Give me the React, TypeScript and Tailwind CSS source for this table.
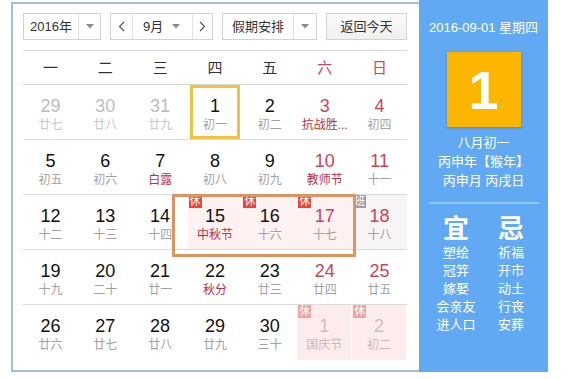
import React from "react";

type Day = {
  n: number;
  sub: string;
  muted?: boolean;
  weekend?: boolean;
  fest?: boolean;
  badge?: "休" | "班";
  tone?: "rest" | "work" | "next";
  today?: boolean;
};

const font = "font-['Liberation_Sans','Noto_Sans_CJK_SC',sans-serif]";

const weeks: Day[][] = [
  [
    { n: 29, sub: "廿七", muted: true },
    { n: 30, sub: "廿八", muted: true },
    { n: 31, sub: "廿九", muted: true },
    { n: 1, sub: "初一", today: true },
    { n: 2, sub: "初二" },
    { n: 3, sub: "抗战胜...", weekend: true, fest: true },
    { n: 4, sub: "初四", weekend: true },
  ],
  [
    { n: 5, sub: "初五" },
    { n: 6, sub: "初六" },
    { n: 7, sub: "白露", fest: true },
    { n: 8, sub: "初八" },
    { n: 9, sub: "初九" },
    { n: 10, sub: "教师节", weekend: true, fest: true },
    { n: 11, sub: "十一", weekend: true },
  ],
  [
    { n: 12, sub: "十二" },
    { n: 13, sub: "十三" },
    { n: 14, sub: "十四" },
    { n: 15, sub: "中秋节", fest: true, badge: "休", tone: "rest" },
    { n: 16, sub: "十六", badge: "休", tone: "rest" },
    { n: 17, sub: "十七", weekend: true, badge: "休", tone: "rest" },
    { n: 18, sub: "十八", weekend: true, badge: "班", tone: "work" },
  ],
  [
    { n: 19, sub: "十九" },
    { n: 20, sub: "二十" },
    { n: 21, sub: "廿一" },
    { n: 22, sub: "秋分", fest: true },
    { n: 23, sub: "廿三" },
    { n: 24, sub: "廿四", weekend: true },
    { n: 25, sub: "廿五", weekend: true },
  ],
  [
    { n: 26, sub: "廿六" },
    { n: 27, sub: "廿七" },
    { n: 28, sub: "廿八" },
    { n: 29, sub: "廿九" },
    { n: 30, sub: "三十" },
    { n: 1, sub: "国庆节", badge: "休", tone: "next" },
    { n: 2, sub: "初二", badge: "休", tone: "next" },
  ],
];

function Caret() {
  return (
    <svg width="8" height="5" viewBox="0 0 8 5" aria-hidden="true">
      <polygon points="0,0 8,0 4,4.5" fill="#8a8a8a" />
    </svg>
  );
}

function Chevron({ dir }: { dir: "l" | "r" }) {
  return (
    <svg width="7" height="11" viewBox="0 0 7 11" fill="none" stroke="#555" strokeWidth="1.2" aria-hidden="true">
      {dir === "l" ? <polyline points="6,1 1.5,5.5 6,10" /> : <polyline points="1,1 5.5,5.5 1,10" />}
    </svg>
  );
}

function Cell({ d }: { d: Day }) {
  let numColor = "text-[#111]";
  if (d.muted) numColor = "text-[#bdbdbd]";
  else if (d.tone === "next") numColor = "text-[#c9c0c0]";
  else if (d.weekend) numColor = "text-[#cf4257]";

  let subColor = "text-[#a2a2a2]";
  if (d.muted) subColor = "text-[#c8c8c8]";
  else if (d.tone === "next") subColor = "text-[#cdb8b8]";
  else if (d.fest) subColor = "text-[#bf2f43]";

  let bg = "";
  if (d.tone === "rest") bg = "bg-[#fdf1f1]";
  if (d.tone === "work") bg = "bg-[#f6f4f4]";
  if (d.tone === "next") bg = "bg-[#fdecec] mr-px";

  let badgeBg = "bg-[#e4493b]";
  if (d.badge === "班") badgeBg = "bg-[#9d9d9d]";
  if (d.tone === "next") badgeBg = "bg-[#f0a3a3]";

  return (
    <div className={`relative flex flex-col items-center pt-[10px] ${bg}`}>
      {d.badge && (
        <span
          className={`absolute left-[1px] top-0 flex h-[13px] w-[13px] items-center justify-center text-[11px] leading-none text-white ${badgeBg}`}
        >
          {d.badge}
        </span>
      )}
      {d.today && <div className="absolute inset-x-[2px] top-0 bottom-0 border-[3px] border-[#f2c141]" />}
      <span className={`text-[18px] leading-[22px] ${numColor}`}>{d.n}</span>
      <span className={`whitespace-nowrap text-[12px] leading-[16px] ${subColor}`}>{d.sub}</span>
    </div>
  );
}

export default function App() {
  return (
    <div className={`flex h-[379px] w-[582px] overflow-hidden bg-white ${font}`}>
      <div className="ml-[11px] mt-[2px] flex h-[370px] w-[408px] flex-col border-y-2 border-l-2 border-[#a1c0d6] pl-[10px] pr-[12px] pt-[9px]">
        <div className="flex h-[27px] text-[13px] text-[#333]">
          <div className="flex w-[78px] border border-[#d2d2d2]">
            <span className="flex w-[55px] items-center justify-center border-r border-[#e2e2e2]">2016年</span>
            <span className="flex flex-1 items-center justify-center">
              <Caret />
            </span>
          </div>
          <div className="ml-[9px] flex w-[103px] border border-[#d2d2d2]">
            <span className="flex w-[22px] items-center justify-center border-r border-[#e2e2e2]">
              <Chevron dir="l" />
            </span>
            <span className="flex w-[60px] items-center justify-between border-r border-[#e2e2e2] pl-[10px] pr-[12px]">
              9月
              <Caret />
            </span>
            <span className="flex flex-1 items-center justify-center">
              <Chevron dir="r" />
            </span>
          </div>
          <div className="ml-[9px] flex w-[95px] border border-[#d2d2d2]">
            <span className="flex w-[71px] items-center justify-center border-r border-[#e2e2e2]">假期安排</span>
            <span className="flex flex-1 items-center justify-center">
              <Caret />
            </span>
          </div>
          <button
            type="button"
            className="ml-[9px] flex w-[81px] items-center justify-center border border-[#d2d2d2] bg-gradient-to-b from-[#fbfbfb] to-[#efefef] text-[13px] text-[#333]"
          >
            返回今天
          </button>
        </div>

        <div className="mt-[10px] grid h-[35px] grid-cols-7 border-y border-[#d6d6d6] pt-[2px] text-[15px]">
          {["一", "二", "三", "四", "五", "六", "日"].map((w, i) => (
            <div key={w} className={`flex items-center justify-center ${i > 4 ? "text-[#d0445f]" : "text-[#333]"}`}>
              {w}
            </div>
          ))}
        </div>

        <div className="relative">
          {weeks.map((week, wi) => (
            <div
              key={wi}
              className={`grid h-[55px] grid-cols-7 ${wi < 4 ? "border-b border-[#dcdcdc]" : ""}`}
            >
              {week.map((d, di) => (
                <Cell key={di} d={d} />
              ))}
            </div>
          ))}
          <div className="absolute left-[149px] top-[109px] h-[63px] w-[184px] border-[3px] border-[#de9461]" />
        </div>
      </div>

      <div className="flex h-[372px] w-[129px] flex-col items-center bg-[#62a9f4] text-white">
        <div className="pt-[19px] text-[13px] leading-[18px]">2016-09-01 星期四</div>
        <div className="mt-[15px] flex h-[75px] w-[74px] items-center justify-center bg-[#fdb600] text-[54px] font-bold leading-none shadow-[0_1px_3px_rgba(0,0,0,0.2)]">
          1
        </div>
        <div className="mt-[6px] flex flex-col items-center text-[13px] leading-[19px]">
          <span>八月初一</span>
          <span>丙申年【猴年】</span>
          <span>丙申月 丙戌日</span>
        </div>
        <div className="mt-[12px] h-[2px] w-[110px] bg-[#8fc6fb]" />
        <div className="mt-[10px] flex w-[110px]">
          {[
            { h: "宜", items: ["塑绘", "冠笄", "嫁娶", "会亲友", "进人口"] },
            { h: "忌", items: ["祈福", "开市", "动土", "行丧", "安葬"] },
          ].map((col) => (
            <div key={col.h} className="flex w-[55px] flex-col items-center">
              <span className="text-[26px] font-bold leading-[30px]">{col.h}</span>
              {col.items.map((it) => (
                <span key={it} className="text-[13px] leading-[18px]">
                  {it}
                </span>
              ))}
            </div>
          ))}
        </div>
      </div>
    </div>
  );
}
